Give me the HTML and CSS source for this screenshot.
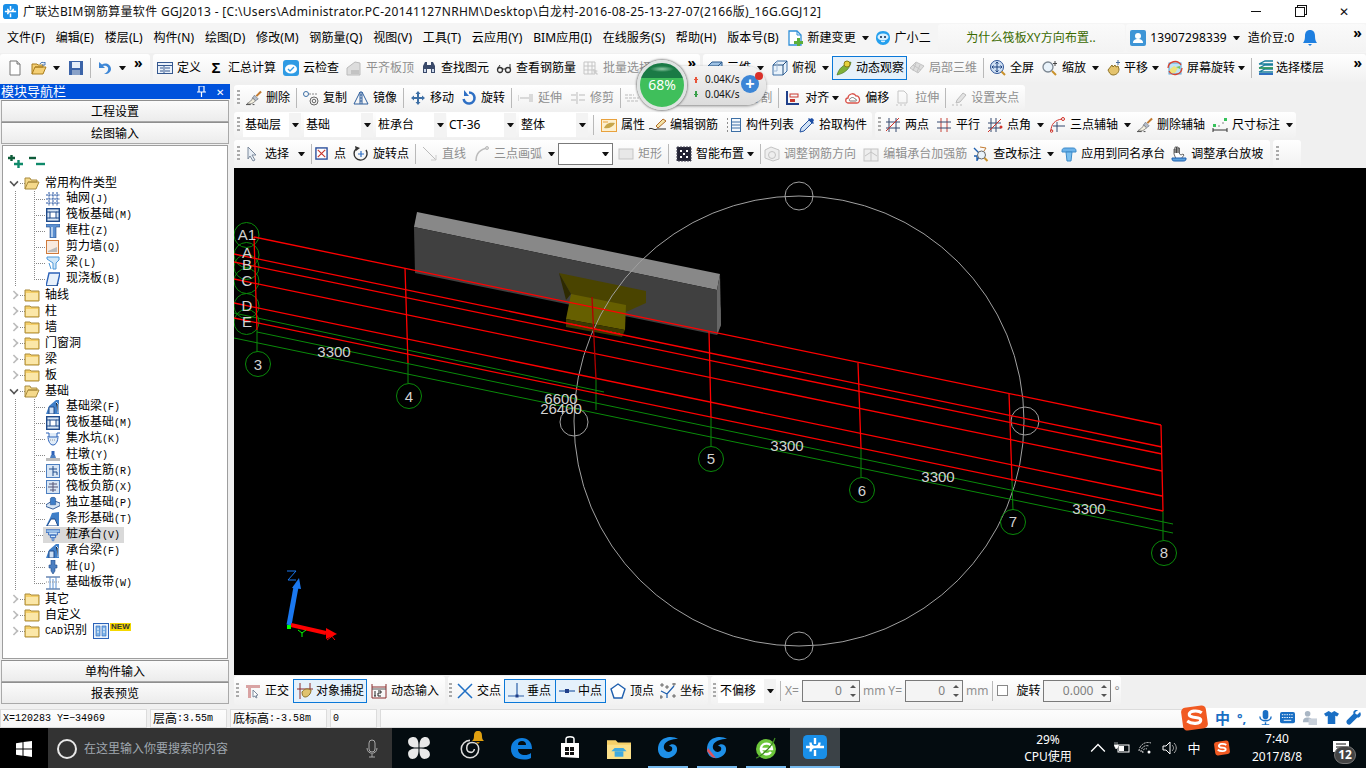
FILE: index.html
```html
<!DOCTYPE html>
<html lang="zh">
<head>
<meta charset="utf-8">
<title>广联达BIM钢筋算量软件 GGJ2013</title>
<link rel="stylesheet" href="styles.css">
</head>
<body>
<svg class="sprite" xmlns="http://www.w3.org/2000/svg">
<symbol id="logo" viewBox="0 0 16 16"><rect width="16" height="16" rx="3" fill="#1a8fe8"/><path d="M8 2v4M8 10v4M2 8h12M5 5c0 2 1 3 3 3s3-1 3-3M5 11c0-2 1-3 3-3" fill="none" stroke="#fff" stroke-width="1.600"/></symbol>
<symbol id="new" viewBox="0 0 16 16"><path d="M3 1h7l3 3v11H3z" fill="#fff" stroke="#777"/><path d="M10 1v3h3" fill="#ddd" stroke="#777"/></symbol>
<symbol id="open" viewBox="0 0 16 16"><path d="M1 14V4h5l1 1h5v2H4l-3 7h11l3-7H4" fill="#f4cf74" stroke="#a97c1d"/><path d="M9 4c1-2 3-2 4-1l1-1v3h-3" fill="none" stroke="#4d7bb5"/></symbol>
<symbol id="save" viewBox="0 0 16 16"><rect x="1" y="1" width="14" height="14" fill="#3c64a8"/><rect x="4" y="2" width="8" height="6" fill="#e6eef8"/><rect x="4" y="10" width="8" height="5" fill="#8aa2c8"/></symbol>
<symbol id="undo" viewBox="0 0 16 16"><path d="M2 2v6h6L6 6c3-1 6 1 5 4-.4 1.600-2 3-4 4 4 .5 7-2 7-5 0-5-6-7-9-4.500z" fill="#3d86d6"/></symbol>
<symbol id="def" viewBox="0 0 16 16"><rect x=".5" y="2.500" width="15" height="11" fill="#eaf1fa" stroke="#35588f"/><path d="M1 5.500h14M3 8h3M3 11h3M8 8h5M8 11h5M7 6v7" stroke="#35588f" fill="none"/></symbol>
<symbol id="cloud" viewBox="0 0 16 16"><rect width="16" height="16" rx="3" fill="#2f9be4"/><ellipse cx="8" cy="9" rx="6" ry="4.500" fill="#fff"/><path d="M5 9l2 2 4-4" stroke="#2f9be4" stroke-width="1.300" fill="none"/></symbol>
<symbol id="gflat" viewBox="0 0 16 16"><path d="M1 15V8l8-6 5 1v12z" fill="#ddd" stroke="#bbb"/><path d="M5 11h8M5 13h8" stroke="#aaa"/></symbol>
<symbol id="find" viewBox="0 0 16 16"><path d="M2 13V6l2-4h2v11zM14 13V6l-2-4h-2v11z" fill="#3a4a6a"/><rect x="6" y="5" width="4" height="4" fill="#3a4a6a"/><rect x="3" y="9" width="2" height="3" fill="#cdd9ec"/><rect x="11" y="9" width="2" height="3" fill="#cdd9ec"/></symbol>
<symbol id="glass" viewBox="0 0 16 16"><circle cx="4" cy="10" r="2.500" fill="none" stroke="#333" stroke-width="1.300"/><circle cx="12" cy="10" r="2.500" fill="none" stroke="#333" stroke-width="1.300"/><path d="M6 9h4M2 8l2-3M14 8V4" stroke="#333" fill="none"/></symbol>
<symbol id="batch" viewBox="0 0 16 16"><path d="M1 2h11v12H1zM1 6h11M1 10h11M5 2v12M9 2v12" fill="none" stroke="#c5c5c5"/><path d="M10 9l5 2-2 1 2 2-1 1-2-2-1 1z" fill="#ccc"/></symbol>
<symbol id="cube" viewBox="0 0 16 16"><path d="M1 6l4-4h10v8l-4 4H1z" fill="#9ec3e6" stroke="#2d5a8c"/><path d="M1 6h10v8M11 6l4-4" fill="none" stroke="#2d5a8c"/></symbol>
<symbol id="top" viewBox="0 0 16 16"><path d="M1 5l4-4h10v10l-4 4H1z" fill="#eaf3fb" stroke="#3d6fa5"/><path d="M1 5h10v10M11 5l4-4" fill="none" stroke="#1f4a7a"/><path d="M5 1v10H1" fill="none" stroke="#9fb9d6"/></symbol>
<symbol id="orbit" viewBox="0 0 16 16"><path d="M1 15C3 8 7 5 15 2c-1 6-5 11-14 13z" fill="#7fb03a" stroke="#3f6d1d" stroke-width=".6"/><circle cx="11" cy="4" r="3" fill="#e6d23c" stroke="#8a7a15"/></symbol>
<symbol id="gcube" viewBox="0 0 16 16"><path d="M1 8l6-6 8 4-6 7z" fill="#ddd" stroke="#c3c3c3"/><path d="M4 5l8 5M7 3l-3 8M11 5l-3 7" stroke="#c3c3c3" fill="none"/></symbol>
<symbol id="full" viewBox="0 0 16 16"><circle cx="7" cy="7" r="6.500" fill="#cfe0f4" stroke="#2f5597"/><path d="M7 2v10M2 7h10M5.500 3.500L7 2l1.500 1.500M5.500 10.500L7 12l1.500-1.500M3.500 5.500L2 7l1.500 1.500M10.500 5.500L12 7l-1.500 1.500" fill="none" stroke="#1f4480"/><path d="M11.500 11.500l3.500 3.500" stroke="#c9912a" stroke-width="2"/></symbol>
<symbol id="zoom" viewBox="0 0 16 16"><circle cx="6" cy="7" r="5" fill="#e9f3fb" stroke="#7c8792" stroke-width="1.300"/><path d="M10 11l4 4" stroke="#c9912a" stroke-width="2"/><path d="M13 1v5M11 3.500h4" stroke="#444"/></symbol>
<symbol id="pan" viewBox="0 0 16 16"><path d="M2 10l4-5 1 2 2-2 1 2 2-1 1 3c0 4-3 6-6 6-3 0-4-3-5-5z" fill="#e4c36d" stroke="#8f7327"/><path d="M12 0v5M10 2.500h4" stroke="#4a6e9c"/></symbol>
<symbol id="rot" viewBox="0 0 16 16"><rect x="2" y="3" width="12" height="11" fill="#bfe3f7" stroke="#57a6d6"/><path d="M3 9l4-3 4 2-3 5H3z" fill="#eee27c"/><path d="M9 7l4-1v3z" fill="#7cc25d"/><path d="M1 8a7 7 0 0 1 13-3M15 8a7 7 0 0 1-13 3" fill="none" stroke="#d9432f" stroke-width="1.300"/></symbol>
<symbol id="floor" viewBox="0 0 16 16"><path d="M1 4l6-3h8M1 8l6-3h8M1 12l6-3h8M1 4h14M1 8h14M1 12h14" fill="none" stroke="#1a7f9c" stroke-width="1.300"/><path d="M1 14h14" stroke="#2f6fc0" stroke-width="2"/><path d="M1 8h14" stroke="#3aa04a" stroke-width="1.300"/></symbol>
<symbol id="brush" viewBox="0 0 17 16"><path d="M11 6l5-5" stroke="#c27a30" stroke-width="2.200"/><path d="M9 5l4 4-3 2-3-3z" fill="#b5bcc7" stroke="#5a6675" stroke-width=".6"/><path d="M7 8c-1 3-3 4-6 6 3 1 7 0 9-3z" fill="#f3efe0" stroke="#5a5a5a" stroke-width=".7"/><path d="M0 15h5M7 15h2" stroke="#444"/></symbol>
<symbol id="copy" viewBox="0 0 16 16"><circle cx="3" cy="4" r="2.500" fill="none" stroke="#3d6fa5"/><circle cx="11" cy="11" r="4" fill="none" stroke="#666"/><circle cx="11" cy="11" r="1.800" fill="none" stroke="#666"/><path d="M6 4h6M13 3v3" stroke="#888" stroke-dasharray="2 1"/></symbol>
<symbol id="mirror" viewBox="0 0 16 16"><path d="M7 2v12H1zM9 2v12h6z" fill="none" stroke="#2f5f9c"/><path d="M8 1v14" stroke="#2f5f9c" stroke-dasharray="2 1"/></symbol>
<symbol id="move" viewBox="0 0 16 16"><path d="M8 1l2.500 3H9v3h3V5.500L15 8l-3 2.500V9H9v3h1.500L8 15l-2.500-3H7V9H4v1.500L1 8l3-2.500V7h3V4H5.500z" fill="#3d6fa5"/></symbol>
<symbol id="rotate" viewBox="0 0 16 16"><path d="M8 2.500a5.500 5.500 0 1 1-5.400 6.500" fill="none" stroke="#2e6fc4" stroke-width="2.600"/><path d="M3 0v6h5z" fill="#2e6fc4"/></symbol>
<symbol id="extend" viewBox="0 0 16 16"><path d="M2 8h9M12 4v8M14 4v8" stroke="#bbb" fill="none"/><path d="M0 5v6" stroke="#bbb"/></symbol>
<symbol id="trim" viewBox="0 0 16 16"><path d="M1 5h5M1 10h5M7 2v12M9 5h6M9 10h6" stroke="#bbb" fill="none"/></symbol>
<symbol id="merge" viewBox="0 0 16 16"><path d="M1 5h9M3 11h12M1 8h14" stroke="#bbb" stroke-dasharray="3 1"/></symbol>
<symbol id="align" viewBox="0 0 16 16"><path d="M2 1v14M2 14h12" stroke="#1f3f8a" stroke-width="2"/><rect x="5" y="4" width="8" height="3" fill="none" stroke="#c8392e"/><rect x="5" y="9" width="5" height="3" fill="#c8392e"/></symbol>
<symbol id="offset" viewBox="0 0 16 16"><path d="M3 13c-3 0-3-5 0-5 0-4 6-6 8-2 4-1 5 7 1 7z" fill="#fff" stroke="#d9534a" stroke-width="1.300"/><path d="M5 11c-1 0-1-2 0-2 1-2 4-2 5 0 2 0 2 2 1 2z" fill="none" stroke="#777"/></symbol>
<symbol id="stretch" viewBox="0 0 16 16"><path d="M3 1h6l3 3v9H3zM1 15h2M5 15h2M9 15h2" fill="none" stroke="#c5c5c5"/></symbol>
<symbol id="grip" viewBox="0 0 16 16"><path d="M1 15h2M5 15h2M9 15h2" stroke="#bbb"/><path d="M6 10l6-7 3 2-6 7-4 1z" fill="#e3e3e3" stroke="#bbb"/></symbol>
<symbol id="prop" viewBox="0 0 16 16"><rect x=".5" y="2.500" width="15" height="12" fill="#fdf0cf" stroke="#e8a13d"/><path d="M3 11c2-5 6-6 11-5-2 4-6 6-11 5z" fill="#c7a64a"/><path d="M2 5h5" stroke="#e8a13d"/></symbol>
<symbol id="rebar" viewBox="0 0 18 16"><path d="M0 12c3-2 5 2 8 0h9" fill="none" stroke="#222"/><path d="M7 9l7-7 3 2-8 7z" fill="#f3e3a5" stroke="#b06a28"/></symbol>
<symbol id="list" viewBox="0 0 16 16"><path d="M1 2h2M1 6h2M1 10h2M1 14h2" stroke="#222" stroke-dasharray="1 1"/><rect x="5.500" y="1.500" width="9" height="13" fill="#f4f8fc" stroke="#3d6fa5"/><path d="M6 5h8M6 8h8M6 11h8" stroke="#3d6fa5"/></symbol>
<symbol id="pick" viewBox="0 0 16 16"><path d="M10 3L2 11l-1 4 4-1 8-8z" fill="#cfe0f4" stroke="#2453a0"/><path d="M9 2l5 5 1-1-1-1 1-2-2-2-2 1-1-1z" fill="#1f4fa5"/></symbol>
<symbol id="two" viewBox="0 0 16 16"><path d="M4 1v14M11 1v14M1 5h14M1 11h14" stroke="#34486e" fill="none"/><path d="M1 14L14 1" stroke="#d0322a"/></symbol>
<symbol id="par" viewBox="0 0 16 16"><path d="M5 1v14M11 1v14" stroke="#c6443b"/><path d="M1 5h14M1 11h14" stroke="#34486e"/></symbol>
<symbol id="ang" viewBox="0 0 16 16"><path d="M4 1v14M9 1v14M1 6h13M1 11h13" stroke="#34486e" fill="none"/><path d="M1 15L14 2" stroke="#d0322a"/><circle cx="14" cy="10" r="1.500" fill="#d0322a"/></symbol>
<symbol id="arc" viewBox="0 0 16 16"><path d="M1 14C1 7 5 3 12 2" fill="none" stroke="#d0322a"/><circle cx="13" cy="2" r="1.500" fill="none" stroke="#d0322a"/><circle cx="1.500" cy="14" r="1.300" fill="none" stroke="#d0322a"/><path d="M7 5v10M3 9h12" stroke="#34486e"/></symbol>
<symbol id="dim" viewBox="0 0 16 16"><path d="M1 11v4M15 11v4M1 13h14" stroke="#333"/><rect x="1" y="7" width="3" height="3" fill="#35c25a"/><rect x="12" y="1" width="3" height="3" fill="#35c25a"/><path d="M6 9h2M10 6h2" stroke="#888"/></symbol>
<symbol id="sel" viewBox="0 0 12 16"><path d="M2 1l8 8H6l3 5-2 1-3-5-2 3z" fill="#e8eef5" stroke="#7c8a9c"/></symbol>
<symbol id="point" viewBox="0 0 14 14"><rect x="1" y="1" width="12" height="12" fill="#fff" stroke="#2b4f9c" stroke-width="1.500"/><path d="M3 3l8 8M11 3l-8 8" stroke="#c9362c" stroke-width="1.200"/></symbol>
<symbol id="rotpt" viewBox="0 0 16 16"><path d="M3 3a6.500 6.500 0 1 0 10 1" fill="none" stroke="#333" stroke-width="1.400"/><path d="M2 0l5 2-4 3z" fill="#333"/><path d="M8 5v6M5 8h6" stroke="#2e6fc4" stroke-width="1.200"/></symbol>
<symbol id="gline" viewBox="0 0 16 16"><path d="M1 1l13 13" stroke="#bbb"/><path d="M14 9v5H9" fill="none" stroke="#ccc"/></symbol>
<symbol id="garc" viewBox="0 0 16 16"><path d="M2 15C2 7 6 3 14 2" fill="none" stroke="#bbb" stroke-width="1.400"/><circle cx="13" cy="2" r="1.500" fill="#ddd" stroke="#bbb"/></symbol>
<symbol id="grect" viewBox="0 0 16 16"><rect x="1" y="3" width="14" height="10" fill="#e8e8e8" stroke="#c5c5c5"/></symbol>
<symbol id="smart" viewBox="0 0 16 16"><rect x="1" y="1" width="14" height="14" fill="#223" stroke="#445" stroke-dasharray="2 1"/><path d="M4 4h2v2H4zM10 4h2v2h-2zM7 7h2v2H7zM4 10h2v2H4zM10 10h2v2h-2z" fill="#fff"/></symbol>
<symbol id="gadj" viewBox="0 0 16 16"><path d="M1 4l6-3 8 3v9l-6 2-8-3z" fill="#eee" stroke="#c3c3c3"/><circle cx="8" cy="9" r="3.500" fill="none" stroke="#c3c3c3"/></symbol>
<symbol id="gedit" viewBox="0 0 16 16"><rect x="1" y="3" width="14" height="12" fill="#eee" stroke="#c3c3c3"/><path d="M8 3v12M2 10l6-4 6 4" fill="none" stroke="#c3c3c3"/></symbol>
<symbol id="check" viewBox="0 0 16 16"><path d="M1 2l5 5M4 14l3-4M1 10h3v5" fill="none" stroke="#1f5fae" stroke-width="1.400"/><circle cx="8.500" cy="9" r="4" fill="#e9f3fb" stroke="#666"/><path d="M11.500 12l3 3" stroke="#c9912a" stroke-width="2"/><path d="M7 1l6 1-2 3" fill="none" stroke="#c27a30"/></symbol>
<symbol id="apply" viewBox="0 0 16 16"><path d="M1 5c0-2 1-3 3-3h8c2 0 3 1 3 3v1H1z" fill="#6cb3ea" stroke="#3d8ac9"/><path d="M5 6h6l-1 9H6z" fill="#7cc0ef" stroke="#3d8ac9"/></symbol>
<symbol id="hand" viewBox="0 0 16 16"><path d="M3 8V3h1v4-6h1.500v6-6H7v6-5h1.500v6L10 9l2-1 1 1-3 4H5z" fill="#fff" stroke="#444" stroke-width=".8"/><path d="M1 12h14v1c0 2-2 2-3 2H4c-1 0-3 0-3-2z" fill="#5aa0dc" stroke="#1f5fae"/></symbol>
<symbol id="ortho" viewBox="0 0 16 16"><path d="M1 2h14v3H6v10H3V5H1z" fill="#d9a3a3"/><path d="M8 7l5 5-2 .5 1 2-1 .5-1-2-2 1z" fill="#fff" stroke="#7c8a9c"/></symbol>
<symbol id="snap" viewBox="0 0 16 16"><path d="M3 0v16M13 0v10M0 6h16" stroke="#8a2c2c"/><path d="M5 9c2-3 5-4 9-2 0 4-3 7-6 7-2 0-3-2-3-5z" fill="#e0c36e" stroke="#8f7327"/></symbol>
<symbol id="dyn" viewBox="0 0 16 16"><path d="M1 1v3h14V1M1 4v11h14V4" fill="none" stroke="#8a2c2c"/><path d="M1 6h14" stroke="#555"/><path d="M4 8v5M3 13h2M7 8h3v2H7v3h3" fill="none" stroke="#222"/></symbol>
<symbol id="cross" viewBox="0 0 16 16"><path d="M1 1l14 14M15 1L1 15" stroke="#1f6fc4" stroke-width="1.500"/></symbol>
<symbol id="perp" viewBox="0 0 16 16"><path d="M9 0v13M0 13h16" stroke="#2b5fa8" stroke-width="1.200"/><rect x="7.500" y="11.500" width="3" height="3" fill="#1f3f8a"/></symbol>
<symbol id="mid" viewBox="0 0 16 16"><path d="M0 8h16" stroke="#2b5fa8" stroke-width="1.200"/><rect x="6" y="6" width="4" height="4" fill="#1f3f8a"/></symbol>
<symbol id="vert" viewBox="0 0 16 16"><path d="M8 1l7 5-3 9H4L1 6z" fill="#fff" stroke="#1f5fae" stroke-width="1.400"/></symbol>
<symbol id="coord" viewBox="0 0 16 16"><path d="M1 8l6 3 7-8M7 11v4" fill="none" stroke="#1f5fae" stroke-width="1.200"/><path d="M1 1h2v2H1zM13 0h2v2h-2zM0 13h2v2H0zM6 3h2v2H6zM13 12h2v2h-2z" fill="none" stroke="#333" stroke-width=".7"/></symbol>
<symbol id="change" viewBox="0 0 16 16"><path d="M2 1h8l4 4v10H2z" fill="#fff" stroke="#2f8fd8" stroke-width="1.300"/><path d="M10 1v4h4" fill="none" stroke="#2f8fd8"/><path d="M10 8v3h-3v3h3v2h3v-2h3v-3h-3V8z" fill="#5caf3a"/></symbol>
<symbol id="bot" viewBox="0 0 16 16"><path d="M8 1c5 0 7 3 7 7s-3 7-7 7-7-3-7-7 2-7 7-7z" fill="#25a0ee"/><ellipse cx="8" cy="7" rx="5.500" ry="3.500" fill="#d8f0ff"/><circle cx="6" cy="7" r="1" fill="#124"/><circle cx="10" cy="7" r="1" fill="#124"/><path d="M6 11c1 1 3 1 4 0" stroke="#fff" fill="none"/></symbol>
<symbol id="user" viewBox="0 0 16 16"><rect width="16" height="16" rx="2" fill="#3e95d6"/><circle cx="8" cy="6" r="3" fill="#fff"/><path d="M3 13c0-3 2-4 5-4s5 1 5 4z" fill="#fff"/></symbol>
<symbol id="bell" viewBox="0 0 14 16"><path d="M7 0c3 0 5 2 5 6 0 3 .5 5 2 7H0c1.500-2 2-4 2-7 0-4 2-6 5-6z" fill="#1e7fe0"/><path d="M5 14h4l-2 2z" fill="#1e7fe0"/></symbol>
<symbol id="fopen" viewBox="0 0 16 14"><path d="M1 13V2h5l1 2h6v2H4l-3 7h11l3-7H4" fill="#f5d98a" stroke="#a88a3c"/></symbol>
<symbol id="fold" viewBox="0 0 16 14"><path d="M1 13V2h5l1 1h8v10z" fill="#f5cf68" stroke="#a88a3c"/><path d="M2 5h12v7H2z" fill="#fbe7a8"/></symbol>
<symbol id="tgrid" viewBox="0 0 14 14"><path d="M3 0v14M7 0v14M11 0v14M0 3h14M0 7h14M0 11h14" stroke="#2453a0" stroke-dasharray="2 .7"/></symbol>
<symbol id="traft" viewBox="0 0 14 14"><rect x=".7" y=".7" width="12.600" height="12.600" fill="#d8e6f5" stroke="#1f4a8a" stroke-width="1.400"/><rect x="4" y="4" width="6" height="6" fill="#fff" stroke="#1f4a8a"/><path d="M1 4h3M1 10h3M10 4h3M10 10h3" stroke="#1f4a8a"/></symbol>
<symbol id="tcol" viewBox="0 0 14 14"><path d="M0 0h14v3h-4v11H4V3H0z" fill="#5b8fd0" stroke="#1f4a8a" stroke-width=".6"/><path d="M6 3v10" stroke="#cfe0f4" stroke-width="1.500"/></symbol>
<symbol id="twall" viewBox="0 0 14 14"><rect x=".5" y=".5" width="12" height="13" fill="#f8eadf" stroke="#d07a3a"/><path d="M2 11l9-4v5H2z" fill="#bbb"/></symbol>
<symbol id="tbeam" viewBox="0 0 14 14"><path d="M1 1h12v3l-3 3v6H7V7L1 3z" fill="#cfe6f8" stroke="#4d98d8"/><path d="M3 7l2 6" stroke="#4d98d8"/></symbol>
<symbol id="tslab" viewBox="0 0 14 14"><path d="M3 1h11l-3 13H0z" fill="#e8f1fb" stroke="#2c62b8" stroke-width="1.400"/><path d="M1 14h10l1-3" stroke="#1f4a8a" fill="none"/></symbol>
<symbol id="tfb" viewBox="0 0 14 14"><path d="M0 14l3-8 7-6h3v14z" fill="#3f7fc8"/><path d="M3 14V7h5v7z" fill="#cfe0f4" stroke="#1f4a8a"/><path d="M10 2l2 2v9" stroke="#cfe0f4"/></symbol>
<symbol id="tpit" viewBox="0 0 14 14"><path d="M0 1h3v4h8V1h3M2 4c0 5 2 9 5 9s5-4 5-9" fill="#e0ecf8" stroke="#2c62b8"/><path d="M4 8h6" stroke="#999" stroke-dasharray="1 1"/></symbol>
<symbol id="tcap" viewBox="0 0 14 14"><path d="M0 10h14v3H0z" fill="#bbb"/><path d="M4 10l1-3h4l1 3z" fill="#4d7fc0"/><rect x="5.500" y="3" width="3" height="4" fill="#2c62b8"/></symbol>
<symbol id="tmain" viewBox="0 0 14 14"><rect x=".5" y=".5" width="13" height="13" fill="#d8e6f5" stroke="#4d7fc0"/><path d="M3 5h8M7 2v10M7 8h4v3" stroke="#1f4a8a" fill="none"/></symbol>
<symbol id="tneg" viewBox="0 0 14 14"><rect x=".5" y=".5" width="13" height="13" fill="#d8e6f5" stroke="#4d7fc0"/><path d="M2 7h10M7 2v10M3 4h8M4 10h6" stroke="#557" fill="none"/></symbol>
<symbol id="tind" viewBox="0 0 16 14"><path d="M0 9l8-5 8 3v3l-8 4-8-3z" fill="#d8e6f5" stroke="#1f4a8a"/><path d="M5 2c0-2 6-2 6 0v7H5z" fill="#3f7fc8" stroke="#1f4a8a" stroke-width=".6"/></symbol>
<symbol id="tstrip" viewBox="0 0 14 14"><path d="M0 14l4-8 2-5 7-1v14z" fill="#3f7fc8"/><path d="M1 14l4-7h4l3 7z" fill="#fff" stroke="#1f4a8a"/></symbol>
<symbol id="tpc" viewBox="0 0 16 14"><path d="M0 1h16v3H0z" fill="#a8cdf0" stroke="#2c62b8"/><path d="M3 4v3h10V4M5 7h6v3H5zM7 10v3l1 1 1-1v-3" fill="#cfe6f8" stroke="#2c62b8"/></symbol>
<symbol id="tpile" viewBox="0 0 14 14"><path d="M5 0h4v5h2v3H9v3l-2 3-2-3V8H3V5h2z" fill="#4d7fc0" stroke="#1f4a8a" stroke-width=".6"/></symbol>
<symbol id="tband" viewBox="0 0 14 14"><path d="M0 1h14M0 13h14" stroke="#1f4a8a" stroke-width="1.200"/><path d="M4 1v12M10 1v12M7 3v10" stroke="#5b8fd0"/><path d="M0 6h14" stroke="#999" stroke-dasharray="1 1"/></symbol>
<symbol id="tcad" viewBox="0 0 16 16"><rect x=".5" y=".5" width="15" height="15" fill="#e8f2fb" stroke="#2c62b8"/><path d="M3 3h4v10H3zM9 3h4v10H9z" fill="#7fb5e8" stroke="#2c62b8" stroke-width=".6"/><path d="M4 6h2M4 9h2M10 6h2M10 9h2" stroke="#fff"/></symbol>
<symbol id="win" viewBox="0 0 16 16"><path d="M0 2.300l6.500-1V7.500H0zM7.500 1.100L16 0v7.500H7.500zM0 8.500h6.500v6.200L0 13.700zM7.500 8.500H16V16l-8.500-1.200z" fill="#fff"/></symbol>
<symbol id="mic" viewBox="0 0 14 20"><rect x="4" y="1" width="6" height="12" rx="3" fill="none" stroke="#a8a8a8"/><path d="M2 9c0 7 10 7 10 0M7 15v3M4 18h6" fill="none" stroke="#a8a8a8"/></symbol>
<symbol id="pin" viewBox="0 0 22 22"><path d="M10.500 10.500C3 11 1 8 1 5c0-3 3-4 5-4 3 0 5 3 4.500 9.500zM11.500 10.500C11 3 14 1 17 1c3 0 4 3 4 5 0 3-3 5-9.500 4.500zM11.500 11.500C19 11 21 14 21 17c0 3-3 4-5 4-3 0-5-3-4.500-9.500zM10.500 11.500C11 19 8 21 5 21c-3 0-4-3-4-5 0-3 3-5 9.500-4.500z" fill="#e8e8e8"/></symbol>
<symbol id="swirl" viewBox="0 0 22 22"><path d="M11 4a8 8 0 1 0 8 8c0-4-3-6-6-6s-5 2-5 5 2 4 4 4 3-2 3-3" fill="none" stroke="#ddd" stroke-width="1.400"/></symbol>
<symbol id="tbell" viewBox="0 0 14 14"><path d="M7 0c3 0 4 2 4 5 0 2 .5 4 2 5H1c1.500-1 2-3 2-5 0-3 1-5 4-5z" fill="#e0a010"/><path d="M5 11h4l-2 2z" fill="#c48a08"/></symbol>
<symbol id="edge" viewBox="0 0 24 24"><path d="M2 13C2 6 7 2 13 2c6 0 10 4 10 11H9c0 4 3 6 7 6 2 0 4-.5 6-2v5c-2 1-4 1.500-7 1.500C7 23.500 2 20 2 13zm7-4h8c0-3-1.500-4-4-4s-4 1-4 4z" fill="#0f7fe0"/></symbol>
<symbol id="store" viewBox="0 0 22 24"><path d="M2 7h18v15l-18-1z" fill="#fff"/><path d="M7 7V3c0-3 8-3 8 0v4" fill="none" stroke="#fff" stroke-width="1.500"/><path d="M6 11h4v4H6zM11 11h4v4h-4zM6 16h4v3H6zM11 16h4v3h-4z" fill="#111"/></symbol>
<symbol id="expl" viewBox="0 0 22 20"><path d="M0 3h8l2 2h12v15H0z" fill="#f5cf68"/><path d="M0 7h22v13H0z" fill="#fbe08a"/><path d="M7 13h8v5H7z" fill="#3fa9e0"/><path d="M4 13h14l-3-3H7z" fill="#3fa9e0"/></symbol>
<symbol id="gdl" viewBox="0 0 24 24"><path d="M22 3c-4-3-14-3-18 3-4 6-2 15 5 16 7 1 13-4 12-10-.5-4-6-5-8-2 2 0 4 1 3 4-.6 2-5 3-7 0-3-4 0-11 13-11z" fill="#1e90e8"/></symbol>
<symbol id="gdr" viewBox="0 0 24 24"><path d="M22 3c-4-3-14-3-18 3-4 6-2 15 5 16 7 1 13-4 12-10-.5-4-6-5-8-2 2 0 4 1 3 4-.6 2-5 3-7 0-3-4 0-11 13-11z" fill="#1e90e8"/><path d="M3 12l8 10-4-1-5-6z" fill="#e0525a"/></symbol>
<symbol id="ie" viewBox="0 0 24 24"><circle cx="12" cy="13" r="10" fill="#6cc63a"/><path d="M6 13h12c0-7-10-7-11-1-1 6 7 8 10 4" fill="none" stroke="#fff" stroke-width="2.400"/><path d="M2 22c2 0 16-10 19-20" fill="none" stroke="#3d8a20" stroke-width="1.200"/></symbol>
<symbol id="sg" viewBox="0 0 26 26"><rect x="1" y="2" width="24" height="22" rx="4" fill="#f15a22" transform="rotate(-8 13 13)"/><path d="M20 8c-4-3-13-2-12 2 1 4 11 1 11 5 0 4-9 4-13 1" fill="none" stroke="#fff" stroke-width="3"/></symbol>
</svg>

<div class="app">
  <header class="title">
    <svg class="logo"><use href="#logo"/></svg>
    <span class="title-text">广联达BIM钢筋算量软件 GGJ2013 - [C:\Users\Administrator.PC-20141127NRHM\Desktop\白龙村-2016-08-25-13-27-07(2166版)_16G.GGJ12]</span>
    <div class="winbtns"><span class="wmin"></span><span class="wmax"></span><span class="wclose">✕</span></div>
  </header>

  <nav class="menu">
    <span>文件(F)</span><span>编辑(E)</span><span>楼层(L)</span><span>构件(N)</span><span>绘图(D)</span><span>修改(M)</span><span>钢筋量(Q)</span><span>视图(V)</span><span>工具(T)</span><span>云应用(Y)</span><span>BIM应用(I)</span><span>在线服务(S)</span><span>帮助(H)</span><span>版本号(B)</span>
    <span class="it m-new"><svg class="i"><use href="#change"/></svg>新建变更<i class="car"></i></span>
    <span class="it m-bot"><svg class="i"><use href="#bot"/></svg>广小二</span>
    <span class="tip">为什么筏板XY方向布置..</span>
    <span class="acct">
      <span class="it"><svg class="i"><use href="#user"/></svg>13907298339<i class="car"></i></span>
      <span class="bean">造价豆:0</span>
      <svg class="bell"><use href="#bell"/></svg>
      <span class="more end">»</span>
    </span>
  </nav>

  <div class="row r1">
    <div class="band b11">
      <svg class="i"><use href="#new"/></svg>
      <span class="it"><svg class="i"><use href="#open"/></svg><i class="car"></i></span>
      <svg class="i"><use href="#save"/></svg>
      <i class="sep"></i>
      <span class="it"><svg class="i"><use href="#undo"/></svg><i class="car"></i></span>
      <span class="more">»</span>
    </div>
    <div class="band b12">
      <span class="it"><svg class="i"><use href="#def"/></svg>定义</span>
      <span class="it"><b class="sigma">Σ</b>汇总计算</span>
      <span class="it"><svg class="i"><use href="#cloud"/></svg>云检查</span>
      <span class="it off"><svg class="i"><use href="#gflat"/></svg>平齐板顶</span>
      <span class="it"><svg class="i"><use href="#find"/></svg>查找图元</span>
      <span class="it"><svg class="i"><use href="#glass"/></svg>查看钢筋量</span>
      <span class="it off"><svg class="i"><use href="#batch"/></svg>批量选择</span>
      <span class="more push">»</span>
    </div>
    <div class="band b13">
      <span class="it"><svg class="i"><use href="#cube"/></svg>三维<i class="car"></i></span>
      <span class="it"><svg class="i"><use href="#top"/></svg>俯视<i class="car"></i></span>
      <span class="it act a-orbit"><svg class="i"><use href="#orbit"/></svg>动态观察</span>
      <span class="it off"><svg class="i"><use href="#gcube"/></svg>局部三维</span>
      <i class="sep"></i>
      <span class="it"><svg class="i"><use href="#full"/></svg>全屏</span>
      <span class="it"><svg class="i"><use href="#zoom"/></svg>缩放<i class="car"></i></span>
      <span class="it tight ml-1"><svg class="i"><use href="#pan"/></svg>平移<i class="car"></i></span>
      <span class="it"><svg class="i"><use href="#rot"/></svg>屏幕旋转<i class="car near"></i></span>
      <i class="sep"></i>
      <span class="it tight"><svg class="i"><use href="#floor"/></svg>选择楼层</span>
      <span class="more end">»</span>
    </div>
  </div>

  <div class="main">
    <aside class="nav">
      <div class="nav-title"><span>模块导航栏</span><span class="nav-ctl"><svg class="navpin" viewBox="0 0 9 11"><path d="M2 0h5v6H2zM0 6h9M4.500 6v5" fill="none" stroke="#fff" stroke-width="1.200"/></svg><span class="navx">✕</span></span></div>
      <div class="nbtn">工程设置</div>
      <div class="nbtn">绘图输入</div>
      <div class="treebox">
        <div class="treetools">
          <svg class="pm" viewBox="0 0 18 14"><path d="M2 4h7M5.500 1v6" stroke="#0f5c3a" stroke-width="2.400"/><path d="M8 10h9M12.500 6v8" stroke="#0f8a6a" stroke-width="2.400"/></svg>
          <svg class="pm" viewBox="0 0 18 14"><path d="M1 4h7" stroke="#0f5c3a" stroke-width="2.400"/><path d="M8 10h9" stroke="#0f8a6a" stroke-width="2.400"/></svg>
        </div>
        <div class="tree">
          <div class="tr"><i class="ex open"></i><i class="dash"></i><svg class="fd"><use href="#fopen"/></svg><span>常用构件类型</span></div>
          <div class="tr ch"><i class="g1"></i><i class="g2"></i><svg class="ti"><use href="#tgrid"/></svg><span>轴网<em>(J)</em></span></div>
          <div class="tr ch"><i class="g1"></i><i class="g2"></i><svg class="ti"><use href="#traft"/></svg><span>筏板基础<em>(M)</em></span></div>
          <div class="tr ch"><i class="g1"></i><i class="g2"></i><svg class="ti"><use href="#tcol"/></svg><span>框柱<em>(Z)</em></span></div>
          <div class="tr ch"><i class="g1"></i><i class="g2"></i><svg class="ti"><use href="#twall"/></svg><span>剪力墙<em>(Q)</em></span></div>
          <div class="tr ch"><i class="g1"></i><i class="g2"></i><svg class="ti"><use href="#tbeam"/></svg><span>梁<em>(L)</em></span></div>
          <div class="tr ch"><i class="g1"></i><i class="g2 last"></i><svg class="ti"><use href="#tslab"/></svg><span>现浇板<em>(B)</em></span></div>
          <div class="tr"><i class="ex"></i><i class="dash"></i><svg class="fd"><use href="#fold"/></svg><span>轴线</span></div>
          <div class="tr"><i class="ex"></i><i class="dash"></i><svg class="fd"><use href="#fold"/></svg><span>柱</span></div>
          <div class="tr"><i class="ex"></i><i class="dash"></i><svg class="fd"><use href="#fold"/></svg><span>墙</span></div>
          <div class="tr"><i class="ex"></i><i class="dash"></i><svg class="fd"><use href="#fold"/></svg><span>门窗洞</span></div>
          <div class="tr"><i class="ex"></i><i class="dash"></i><svg class="fd"><use href="#fold"/></svg><span>梁</span></div>
          <div class="tr"><i class="ex"></i><i class="dash"></i><svg class="fd"><use href="#fold"/></svg><span>板</span></div>
          <div class="tr"><i class="ex open"></i><i class="dash"></i><svg class="fd"><use href="#fopen"/></svg><span>基础</span></div>
          <div class="tr ch"><i class="g1"></i><i class="g2"></i><svg class="ti"><use href="#tfb"/></svg><span>基础梁<em>(F)</em></span></div>
          <div class="tr ch"><i class="g1"></i><i class="g2"></i><svg class="ti"><use href="#traft"/></svg><span>筏板基础<em>(M)</em></span></div>
          <div class="tr ch"><i class="g1"></i><i class="g2"></i><svg class="ti"><use href="#tpit"/></svg><span>集水坑<em>(K)</em></span></div>
          <div class="tr ch"><i class="g1"></i><i class="g2"></i><svg class="ti"><use href="#tcap"/></svg><span>柱墩<em>(Y)</em></span></div>
          <div class="tr ch"><i class="g1"></i><i class="g2"></i><svg class="ti"><use href="#tmain"/></svg><span>筏板主筋<em>(R)</em></span></div>
          <div class="tr ch"><i class="g1"></i><i class="g2"></i><svg class="ti"><use href="#tneg"/></svg><span>筏板负筋<em>(X)</em></span></div>
          <div class="tr ch"><i class="g1"></i><i class="g2"></i><svg class="ti"><use href="#tind"/></svg><span>独立基础<em>(P)</em></span></div>
          <div class="tr ch"><i class="g1"></i><i class="g2"></i><svg class="ti"><use href="#tstrip"/></svg><span>条形基础<em>(T)</em></span></div>
          <div class="tr ch"><i class="g1"></i><i class="g2 short"></i><span class="picked"><svg class="ti"><use href="#tpc"/></svg><span>桩承台<em>(V)</em></span></span></div>
          <div class="tr ch"><i class="g1"></i><i class="g2"></i><svg class="ti"><use href="#tfb"/></svg><span>承台梁<em>(F)</em></span></div>
          <div class="tr ch"><i class="g1"></i><i class="g2"></i><svg class="ti"><use href="#tpile"/></svg><span>桩<em>(U)</em></span></div>
          <div class="tr ch"><i class="g1"></i><i class="g2 last"></i><svg class="ti"><use href="#tband"/></svg><span>基础板带<em>(W)</em></span></div>
          <div class="tr"><i class="ex"></i><i class="dash"></i><svg class="fd"><use href="#fold"/></svg><span>其它</span></div>
          <div class="tr"><i class="ex"></i><i class="dash"></i><svg class="fd"><use href="#fold"/></svg><span>自定义</span></div>
          <div class="tr"><i class="ex"></i><i class="dash"></i><svg class="fd"><use href="#fold"/></svg><span><em class="big">CAD</em>识别</span><svg class="cadi"><use href="#tcad"/></svg><span class="newtag">NEW</span></div>
        </div>
      </div>
      <div class="nbtn">单构件输入</div>
      <div class="nbtn">报表预览</div>
    </aside>

    <section class="work">
      <div class="row r2">
        <div class="band b21">
          <i class="gr"></i>
          <span class="it"><svg class="i"><use href="#brush"/></svg>删除</span><i class="sep"></i>
          <span class="it"><svg class="i"><use href="#copy"/></svg>复制</span>
          <span class="it ml-2"><svg class="i"><use href="#mirror"/></svg>镜像</span><i class="sep"></i>
          <span class="it"><svg class="i"><use href="#move"/></svg>移动</span>
          <span class="it ml-1"><svg class="i"><use href="#rotate"/></svg>旋转</span><i class="sep"></i>
          <span class="it off"><svg class="i"><use href="#extend"/></svg>延伸</span>
          <span class="it off"><svg class="i"><use href="#trim"/></svg>修剪</span><i class="sep"></i>
          <span class="it off ml-3"><svg class="i"><use href="#merge"/></svg>打断</span>
          <span class="it off"><svg class="i"><use href="#merge"/></svg>合并</span>
          <span class="it off"><svg class="i"><use href="#merge"/></svg>分割</span><i class="sep"></i>
          <span class="it"><svg class="i"><use href="#align"/></svg>对齐<i class="car near"></i></span>
          <span class="it ml-2"><svg class="i"><use href="#offset"/></svg>偏移</span>
          <span class="it off ml-2"><svg class="i"><use href="#stretch"/></svg>拉伸</span><i class="sep"></i>
          <span class="it off ml-1"><svg class="i"><use href="#grip"/></svg>设置夹点</span>
        </div>
      </div>
      <div class="row r3">
        <div class="band b31">
          <i class="gr"></i>
          <span class="pick p1">基础层<i class="pb"><i class="car"></i></i></span>
          <span class="pick p2">基础<i class="pb"><i class="car"></i></i></span>
          <span class="pick p3">桩承台<i class="pb"><i class="car"></i></i></span>
          <span class="pick p4">CT-36<i class="pb"><i class="car"></i></i></span>
          <span class="pick p5">整体<i class="pb"><i class="car"></i></i></span>
          <i class="sep"></i>
          <span class="it t-a"><svg class="i"><use href="#prop"/></svg>属性</span>
          <span class="it t-b"><svg class="i wide"><use href="#rebar"/></svg>编辑钢筋</span>
          <span class="it t-c"><svg class="i"><use href="#list"/></svg>构件列表</span>
          <span class="it t-d"><svg class="i"><use href="#pick"/></svg>拾取构件</span>
        </div>
        <div class="band b32">
          <i class="gr"></i>
          <span class="it ml-1"><svg class="i"><use href="#two"/></svg>两点</span>
          <span class="it"><svg class="i"><use href="#par"/></svg>平行</span>
          <span class="it"><svg class="i"><use href="#ang"/></svg>点角<i class="car"></i></span>
          <span class="it ml-1"><svg class="i"><use href="#arc"/></svg>三点辅轴<i class="car"></i></span>
          <span class="it ml-1"><svg class="i"><use href="#brush"/></svg>删除辅轴</span>
          <span class="it"><svg class="i"><use href="#dim"/></svg>尺寸标注<i class="car"></i></span>
        </div>
      </div>
      <div class="row r4">
        <div class="band b41">
          <i class="gr"></i>
          <span class="it s-sel"><svg class="isel"><use href="#sel"/></svg>选择<i class="car"></i></span><i class="sep"></i>
          <span class="it s-pt"><svg class="ipt"><use href="#point"/></svg>点</span>
          <span class="it ml-1"><svg class="i"><use href="#rotpt"/></svg>旋转点</span><i class="sep"></i>
          <span class="it off"><svg class="i"><use href="#gline"/></svg>直线</span>
          <span class="it off"><svg class="i"><use href="#garc"/></svg>三点画弧<i class="car"></i></span>
          <span class="combo ml-5"><i class="car"></i></span>
          <span class="it off ml-3"><svg class="i"><use href="#grect"/></svg>矩形</span><i class="sep"></i>
          <span class="it mp-1"><svg class="i"><use href="#smart"/></svg>智能布置<i class="car near"></i></span><i class="sep"></i>
          <span class="it off ml-3"><svg class="i"><use href="#gadj"/></svg>调整钢筋方向</span>
          <span class="it off ml-1"><svg class="i"><use href="#gedit"/></svg>编辑承台加强筋</span>
          <span class="it ml-2"><svg class="i"><use href="#check"/></svg>查改标注<i class="car"></i></span>
          <span class="it ml-1"><svg class="i"><use href="#apply"/></svg>应用到同名承台</span>
          <span class="it ml-2"><svg class="i"><use href="#hand"/></svg>调整承台放坡</span>
        </div>
        <div class="band b42"><i class="gr"></i></div>
      </div>

      <div class="canvas">
        <svg class="cad" viewBox="234 168 1132 507" xmlns="http://www.w3.org/2000/svg">
          <polygon points="417,212 720,274 717,290 414,227" fill="#888"/>
          <polygon points="414,227 717,290 721,310 721,325 717,335 415,273" fill="#404040"/>
          <polygon points="717,290 720,274 721,325 717,335" fill="#666"/>
          <polygon points="559,273 646,291 646,303 626,312 571,294" fill="#4a4400"/>
          <polygon points="571,294 626,305 625,330 566,319" fill="#665f00"/>
          <polygon points="566,319 625,330 622,337 566,327" fill="#3d3800"/>
          <polygon points="559,273 571,294 566,300" fill="#2e2a00"/>

          <g class="wl">
            <circle cx="799" cy="421" r="225"/>
            <circle cx="799" cy="196" r="14"/>
            <circle cx="799" cy="646" r="14"/>
            <circle cx="574" cy="422" r="14"/>
            <circle cx="1025" cy="421" r="14"/>
          </g>

          <g class="gl">
            <path d="M234 313L604 392M257 332L1173 524M234 338L1173 533"/>
            <path d="M257 330V352M408 363V383M596 380V410M711 417L711 446M861 448V477M1012 481L1013 510M1163 511V540"/>
            <circle cx="246.500" cy="235" r="12.500"/><circle cx="246.500" cy="255" r="12.500"/><circle cx="246.500" cy="267" r="12.500"/><circle cx="246.500" cy="281" r="12.500"/><circle cx="246.500" cy="306" r="12.500"/><circle cx="246.500" cy="322" r="12.500"/>
            <circle cx="258" cy="364" r="12.500"/><circle cx="409" cy="396" r="12.500"/><circle cx="711" cy="459" r="12.500"/><circle cx="862" cy="490" r="12.500"/><circle cx="1013" cy="522" r="12.500"/><circle cx="1164" cy="553" r="12.500"/>
          </g>

          <g class="rl">
            <path d="M254 237L1161 425M234 254L1162 447M234 262L1162 454M234 279L1162 471M234 303L1162 496M234 318L1163 511"/>
            <path d="M254 237L257 330M405 268L408 363M709 331L711 417M858 363L861 448M1009 393L1012 481M1161 425L1163 511"/>
            <path class="drk" d="M592 297L596 380"/>
          </g>
          <path class="rdots" d="M571 324L622 334"/>

          <g class="lbl">
            <text x="247" y="240">A1</text><text x="247" y="258">A</text><text x="247" y="270">B</text><text x="247" y="286">C</text><text x="247" y="311">D</text><text x="247" y="327">E</text>
            <text x="258" y="370">3</text><text x="409" y="402">4</text><text x="711" y="464">5</text><text x="862" y="496">6</text><text x="1013" y="527">7</text><text x="1164" y="558">8</text>
            <text x="334" y="357">3300</text><text x="561" y="404">6600</text><text x="561" y="414">26400</text><text x="787" y="451">3300</text><text x="938" y="482">3300</text><text x="1089" y="514">3300</text>
          </g>

          <path d="M289 625L296 587" stroke="#1a78f0" stroke-width="5"/>
          <polygon points="299,578 292,588 301,589" fill="#1a78f0"/>
          <path d="M287 571h9l-8 9h8" fill="none" stroke="#1a78f0"/>
          <path d="M291 625L326 633" stroke="#f00" stroke-width="4"/>
          <polygon points="337,634 326,628 326,639" fill="#f00"/>
          <path d="M327 640l8-6M329 633l6 7" stroke="#f00"/>
          <rect x="287" y="625" width="4" height="4" fill="#0f0"/>
          <path d="M298 630l4 3 4-3M302 633v4" fill="none" stroke="#0f0"/>
        </svg>
      </div>

      <div class="row r5">
        <div class="band b51">
          <i class="gr"></i>
          <span class="it"><svg class="i"><use href="#ortho"/></svg>正交</span>
          <span class="it act a-snap"><svg class="i"><use href="#snap"/></svg>对象捕捉</span>
          <span class="it a-dyn"><svg class="i"><use href="#dyn"/></svg>动态输入</span>
        </div>
        <div class="band b52">
          <i class="gr"></i>
          <span class="it ml-1"><svg class="i"><use href="#cross"/></svg>交点</span>
          <span class="it act a-perp"><svg class="i"><use href="#perp"/></svg>垂点</span>
          <span class="it act a-mid"><svg class="i"><use href="#mid"/></svg>中点</span>
          <span class="it"><svg class="i"><use href="#vert"/></svg>顶点</span>
          <span class="it ml-2"><svg class="i"><use href="#coord"/></svg>坐标</span>
        </div>
        <div class="band b53">
          <i class="gr"></i>
          <span class="pick p6">不偏移<i class="pb"><i class="car"></i></i></span>
          <i class="sep"></i>
          <span class="dis">X=</span>
          <span class="spin"><span>0</span><i class="arr"><i></i><i></i></i></span>
          <span class="dis">mm</span>
          <span class="dis">Y=</span>
          <span class="spin"><span>0</span><i class="arr"><i></i><i></i></i></span>
          <span class="dis">mm</span>
          <i class="sep"></i>
          <i class="cb"></i>
          <span class="rott">旋转</span>
          <span class="spin sp2"><span>0.000</span><i class="arr"><i></i><i></i></i></span>
          <span class="dis">°</span>
        </div>
      </div>
    </section>
  </div>

  <footer class="status">
    <span class="c c1"><em>X=120283 Y=−34969</em></span>
    <span class="c c2">层高<em>:3.55m</em></span>
    <span class="c c3">底标高<em>:-3.58m</em></span>
    <span class="c c4"><em>0</em></span>
    <span class="c c5"></span>
  </footer>

  <div class="taskbar">
    <div class="start"><svg class="winico"><use href="#win"/></svg></div>
    <div class="search"><i class="cortana"></i><span>在这里输入你要搜索的内容</span><svg class="micico"><use href="#mic"/></svg></div>
    <div class="apps">
      <span class="app-c"><svg class="ai"><use href="#pin"/></svg></span>
      <span class="app-c wide2"><svg class="ai"><use href="#swirl"/></svg><svg class="tb"><use href="#tbell"/></svg></span>
      <span class="app-c"><svg class="ai"><use href="#edge"/></svg></span>
      <span class="app-c"><svg class="ai"><use href="#store"/></svg></span>
      <span class="app-c"><svg class="ai"><use href="#expl"/></svg></span>
      <span class="app-c run"><svg class="ai"><use href="#gdl"/></svg></span>
      <span class="app-c run"><svg class="ai"><use href="#gdr"/></svg></span>
      <span class="app-c run"><svg class="ai"><use href="#ie"/></svg></span>
      <span class="app-c cur"><svg class="ai"><use href="#logo"/></svg></span>
    </div>
    <div class="tray">
      <div class="cpu"><span>29%</span><span>CPU使用</span></div>
      <span class="ti-c up"><svg viewBox="0 0 14 8"><path d="M1 7l6-6 6 6" fill="none" stroke="#fff" stroke-width="1.200"/></svg></span>
      <span class="ti-c"><svg viewBox="0 0 16 12"><rect x="4" y="3" width="11" height="7" fill="none" stroke="#fff"/><rect x="5" y="4" width="5" height="5" fill="#fff"/><path d="M1 0v3M3 0v3M0 3h4v2l-2 2z" fill="#fff" stroke="#fff" stroke-width=".6"/></svg></span>
      <span class="ti-c"><svg viewBox="0 0 16 14"><path d="M1 10a9 9 0 0 1 12-8M3 11a6 6 0 0 1 8-6M5 12a3 3 0 0 1 4-4" fill="none" stroke="#ddd" stroke-dasharray="2 1"/><circle cx="11" cy="11" r="1.500" fill="#fff"/></svg></span>
      <span class="ti-c"><svg viewBox="0 0 16 14"><path d="M1 5h3l4-4v12l-4-4H1z" fill="none" stroke="#fff"/><path d="M10 4c2 2 2 4 0 6M12 2c3 3 3 7 0 10" fill="none" stroke="#aaa"/></svg></span>
      <span class="zh">中</span>
      <svg class="tray-s"><use href="#sg"/></svg>
      <div class="clock"><span>7:40</span><span>2017/8/8</span></div>
      <div class="note"><svg viewBox="0 0 16 14"><path d="M0 0h16v11H0z" fill="#fff"/><path d="M3 3h10M3 6h10" stroke="#111"/></svg><span class="badge">12</span></div>
    </div>
  </div>
</div>

<div class="speed">
  <div class="ball"><span>68%</span></div>
  <div class="rates"><span><i class="au"></i>0.04K/s</span><span><i class="ad"></i>0.04K/s</span></div>
  <div class="plus">+<i></i></div>
</div>

<div class="ime">
  <svg class="ime-s"><use href="#sg"/></svg>
  <b>中</b>
  <b class="punc">°,</b>
  <svg viewBox="0 0 14 16"><rect x="4" y="0" width="6" height="10" rx="3" fill="#1a6fc4"/><path d="M1 7c0 6 12 6 12 0M7 13v3M3 16h8" fill="none" stroke="#1a6fc4" stroke-width="1.500"/></svg>
  <svg viewBox="0 0 16 14"><rect x="0" y="1" width="16" height="12" rx="2" fill="#1a6fc4"/><path d="M2 4h12M2 7h12" stroke="#fff" stroke-dasharray="1.500 1"/><path d="M4 10h8" stroke="#fff"/></svg>
  <svg viewBox="0 0 16 16"><circle cx="6" cy="4" r="3" fill="#a9b6c4"/><path d="M1 13c0-4 2-5 5-5s5 1 5 5z" fill="#a9b6c4"/><rect x="7" y="9" width="9" height="7" fill="#c8d0da"/></svg>
  <svg viewBox="0 0 16 14"><path d="M5 0l3 2 3-2 5 3-2 3-2-1v9H4V5L2 6 0 3z" fill="#1a6fc4"/></svg>
  <svg viewBox="0 0 16 16"><path d="M15 2l-3 3-2-1 0-2 3-2c-3-1-6 1-5 4L1 11c-2 3 2 6 4 4l7-7c3 1 5-3 3-6z" fill="#1a6fc4"/></svg>
</div>
</body>
</html>
```

FILE: styles.css
```css
* { box-sizing: border-box; }
html, body { margin: 0; padding: 0; width: 1366px; height: 768px; overflow: hidden; background: #f0f0f0; }
body { font: 12px/16px "Noto Sans", "Noto Sans CJK SC", sans-serif; color: #000; position: relative; }
i, em, b { font-style: normal; }
.sprite { position: absolute; width: 0; height: 0; }
.app { display: flex; flex-direction: column; width: 1366px; height: 768px; }

.title { height: 23px; background: #fff; display: flex; align-items: center; padding-left: 3px; flex: none; }
.logo { width: 15px; height: 15px; flex: none; margin-right: 5px; }
.title-text { font-size: 12px; white-space: nowrap; color: #111; letter-spacing: .31px; }
.winbtns { margin-left: auto; display: flex; align-items: center; height: 20px; }
.wmin { width: 10px; height: 1px; background: #111; margin-right: 34px; }
.wmax { width: 10px; height: 10px; border: 1px solid #111; margin-right: 34px; box-shadow: 2px -2px 0 -1px #fff, 2px -2px 0 0 #111; }
.wclose { font-size: 12px; width: 27px; color: #111; }

.menu { height: 30px; flex: none; display: flex; align-items: center; gap: 10.7px; padding-left: 7px; background: #f5f5f5; letter-spacing: .1px; }
.m-new { margin-left: -2px; }
.m-bot { margin-left: -5px; }
.tip { width: 187px; height: 28px; margin-left: -4px; background: linear-gradient(#fafafa, #f3f3f3); border-radius: 3px; color: #3a6a00; display: flex; align-items: center; justify-content: center; }
.acct { flex: 1; height: 28px; margin-left: -9px; display: flex; align-items: center; padding-left: 4px; background: linear-gradient(#fafafa, #f3f3f3); border-radius: 3px; }
.bean { margin-left: 8px; }
.bell { width: 14px; height: 16px; margin-left: 9px; }

.it { display: flex; align-items: center; gap: 4px; white-space: nowrap; flex: none; }
.it.tight { gap: 2px; }
.i { width: 16px; height: 16px; flex: none; }
.i.wide { width: 18px; margin-right: -1px; }
.off { color: #8f8f8f; }
.car { display: inline-block; width: 7px; height: 4px; margin-left: 2px; flex: none; border-left: 3.5px solid transparent; border-right: 3.5px solid transparent; border-top: 4px solid #111; }
.car.near { margin-left: -1px; }
.more { font-size: 14px; line-height: 10px; font-weight: 700; align-self: flex-start; margin-top: 4px; }
.more.push { margin-left: auto; margin-right: 4px; }
.more.end { margin-left: auto; margin-right: 4px; }
.sigma { font-size: 15px; width: 16px; text-align: center; font-family: "Liberation Sans", sans-serif; }
.sep { width: 1px; height: 20px; background: #b9b9b9; flex: none; margin: 0 -2px; }
.gr { width: 3px; height: 16px; flex: none; margin: 0 -2px 0 0; background: repeating-linear-gradient(#aaa 0 2px, transparent 2px 4px); }

.row { display: flex; background: #f0f0f0; flex: none; }
.band { display: flex; align-items: center; gap: 8px; height: 100%; background: linear-gradient(#fff, #f1f1f1); border-radius: 3px; flex: none; }
.r1 { height: 31px; padding: 1px 0 2px; gap: 3px; }
.b11 { width: 150px; padding-left: 7px; }
.b12 { width: 547px; padding-left: 4px; gap: 7px; }
.b13 { flex: 1; flex-basis: 0; padding-left: 4px; min-width: 0; }
.act { border: 1px solid #0a78d8; background: #e5f1fb; height: 24px; padding: 0 2px 0 3px; }
.a-orbit { margin: 0 -6px 0 -5px; width: 75px; }

.main { height: 623px; display: flex; flex: none; }
.nav { width: 230px; flex: none; display: flex; flex-direction: column; background: #f0f0f0; }
.nav-title { height: 15px; background: #0052dc; color: #fff; display: flex; align-items: center; justify-content: space-between; font-size: 13px; line-height: 15px; padding: 0 6px 0 1px; }
.nav-ctl { display: flex; align-items: center; gap: 10px; }
.navpin { width: 9px; height: 11px; }
.navx { font-size: 10px; line-height: 10px; }
.nbtn { height: 22px; margin: 1px 1px 0 1px; border: 1px solid #a9a9a9; border-top-color: #8f8f8f; background: linear-gradient(#fbfbfb, #ececec); text-align: center; font-size: 12px; line-height: 21px; flex: none; }
.nbtn + .nbtn { margin-top: 0; }
.treebox { height: 514px; margin: 1px 2px 0 2px; background: #fff; border: 1px solid #9e9e9e; flex: none; overflow: hidden; }
.treetools { height: 29px; display: flex; align-items: center; gap: 4px; padding: 0 0 0 3px; }
.pm { width: 18px; height: 14px; }
.tree { display: flex; flex-direction: column; }
.tr { height: 16px; display: flex; align-items: center; flex: none; white-space: nowrap; padding-left: 7px; }
.tr em { font: 10px/16px "Liberation Mono", monospace; }
.ex { width: 8px; height: 8px; flex: none; border-right: 2px solid #bbb; border-top: 2px solid #bbb; transform: rotate(45deg) scale(.8); }
.ex.open { border-color: #555; transform: rotate(135deg) scale(.8); margin-top: -3px; }
.dash { width: 6px; height: 1px; margin: 0 -2px 0 2px; flex: none; background: repeating-linear-gradient(90deg, #888 0 1px, transparent 1px 2px); }
.fd { width: 16px; height: 14px; flex: none; margin-right: 5px; }
.g1 { width: 19px; height: 16px; flex: none; margin-left: 5px; background: repeating-linear-gradient(#888 0 1px, transparent 1px 2px) left top / 1px 100% no-repeat; }
.g2 { width: 12px; height: 16px; flex: none; background: repeating-linear-gradient(#888 0 1px, transparent 1px 2px) left top / 1px 100% no-repeat, repeating-linear-gradient(90deg, #888 0 1px, transparent 1px 2px) left center / 100% 1px no-repeat; }
.g2.last { background: repeating-linear-gradient(#888 0 1px, transparent 1px 2px) left top / 1px 50% no-repeat, repeating-linear-gradient(90deg, #888 0 1px, transparent 1px 2px) left center / 100% 1px no-repeat; }
.g2.short { width: 9px; }
.ti { width: 14px; height: 14px; flex: none; margin-right: 6px; }
.picked { display: flex; align-items: center; background: #d9d9d9; height: 16px; width: 81px; padding-left: 3px; }
.cadi { width: 16px; height: 16px; margin-left: 6px; flex: none; }
.newtag { font: 700 8px/8px "Liberation Sans", sans-serif; background: #f5d800; color: #333; padding: 0 1px; align-self: flex-start; margin-left: 1px; }

.work { flex: 1; display: flex; flex-direction: column; margin-left: 4px; min-width: 0; }
.r2 { height: 28px; padding: 1px 0 2px; }
.r3 { height: 28px; gap: 3px; padding: 0 0 2px; }
.r4 { height: 28px; gap: 3px; padding: 0 0 1px; }
.b21 { width: 791px; padding-left: 3px; }
.b31 { width: 638px; padding-left: 3px; gap: 3px; }
.b31 > .sep { margin: 0 2px; }
.t-a { margin-left: 2px; }
.t-b { margin-left: 1px; }
.t-c { margin-left: 5px; }
.t-d { margin-left: 2px; }
.b32 { width: 421px; padding-left: 3px; gap: 7px; }
.b41 { width: 1036px; padding-left: 3px; }
.b42 { width: 28px; padding-left: 3px; }
.pick { display: flex; align-items: center; justify-content: space-between; background: #fff; height: 24px; padding-left: 2px; flex: none; }
.pb { width: 12px; height: 24px; background: #f3f3f3; display: flex; align-items: center; justify-content: center; }
.pb .car { margin: 0; }
.p1 { width: 58px; margin-left: 2px; }
.p2 { width: 69px; }
.p3 { width: 70px; }
.p4 { width: 69px; margin-left: -2px; }
.p5 { width: 69px; }
.p6 { width: 58px; margin-left: 1px; }
.s-sel { gap: 7px; }
.isel { width: 12px; height: 16px; flex: none; }
.s-pt { gap: 6px; margin-left: -3px; }
.ipt { width: 13px; height: 13px; flex: none; }
.combo { width: 55px; height: 22px; background: #fff; border: 1px solid #7a7a7a; display: flex; align-items: center; justify-content: flex-end; padding-right: 3px; flex: none; }

.canvas { height: 507px; background: #000; flex: none; }
.cad { display: block; width: 1132px; height: 507px; }
.wl circle { fill: none; stroke: #a0a0a0; stroke-width: 1; }
.gl path, .gl circle { fill: none; stroke: #0a8a0a; stroke-width: 1; }
.rl path { fill: none; stroke: #f00; stroke-width: 1.300; }
.rl path.drk { stroke: #b00000; }
.rdots { stroke: #f00; stroke-dasharray: 2 2; fill: none; }
.lbl text { fill: #d2d2d2; font: 15px "Liberation Sans", sans-serif; text-anchor: middle; }

.r5 { height: 32px; gap: 3px; padding: 1px 0 2px; }
.b51 { width: 211px; padding-left: 2px; }
.a-snap { margin: 0 -4px; padding: 0 2px 0 3px; width: 74px; gap: 3px; }
.b52 { width: 260px; padding-left: 1px; }
.a-perp { width: 52px; margin: 0 -9px 0 -5px; padding: 0 2px 0 3px; gap: 3px; }
.a-mid { width: 51px; margin: 0 -4px 0 0; padding: 0 2px 0 3px; gap: 3px; }
.b53 { width: 410px; padding-left: 2px; gap: 3px; }
.dis { color: #8f8f8f; }
.spin { width: 58px; height: 22px; border: 1px solid #7a7a7a; background: #f4f4f4; display: flex; align-items: center; justify-content: flex-end; color: #7f7f7f; padding-right: 1px; flex: none; gap: 6px; }
.sp2 { width: 68px; }
.arr { width: 10px; display: flex; flex-direction: column; gap: 6px; align-items: center; }
.arr i { width: 6px; height: 3px; border-left: 3px solid transparent; border-right: 3px solid transparent; border-bottom: 3px solid #555; }
.arr i + i { border-bottom: 0; border-top: 3px solid #555; }
.cb { width: 11px; height: 11px; border: 1px solid #888; background: #fff; flex: none; }
.rott { margin-left: 5px; }
.b53 > .sep { margin: 0 1px; }

.status { height: 21px; flex: none; display: flex; gap: 3px; background: #f0f0f0; padding-top: 2px; }
.c { display: flex; align-items: center; height: 19px; background: linear-gradient(#fdfdfd, #f6f6f6); border: 1px solid #dcdcdc; padding-left: 2px; white-space: nowrap; flex: none; }
.c em { font: 10px/16px "Liberation Mono", monospace; }
.c1 { width: 147px; }
.c2 { width: 77px; }
.c3 { width: 97px; }
.c4 { width: 47px; }
.c5 { flex: 1; }

.taskbar { height: 40px; flex: none; display: flex; background: #040c10; color: #fff; }
.start { width: 48px; background: #000; display: flex; align-items: center; justify-content: center; flex: none; padding-top: 2px; }
.winico { width: 16px; height: 16px; }
.search { width: 344px; background: #333; display: flex; align-items: center; padding: 2px 0 0 9px; color: #a0a8b0; flex: none; font-size: 12px; }
.cortana { width: 20px; height: 20px; border-radius: 50%; border: 2px solid #e8e8e8; margin-right: 7px; flex: none; }
.micico { width: 14px; height: 20px; margin-left: auto; margin-right: 13px; }
.apps { display: flex; margin-left: 2px; flex: none; }
.app-c { width: 49px; height: 40px; display: flex; align-items: center; justify-content: center; flex: none; position: relative; }
.wide2 { width: 53px; }
.ai { width: 24px; height: 24px; }
.tb { width: 14px; height: 14px; position: absolute; left: 28px; top: 3px; }
.run::after { content: ""; position: absolute; left: 5px; right: 4px; bottom: 0; height: 2px; background: #76b9ed; }
.cur { width: 50px; background: #3b4247; border-bottom: 2px solid #76b9ed; }
.tray { flex: 1; display: flex; align-items: center; min-width: 0; padding-left: 178px; }
.cpu { width: 60px; display: flex; flex-direction: column; align-items: center; line-height: 17px; flex: none; }
.ti-c { width: 24px; display: flex; justify-content: center; flex: none; }
.ti-c svg { width: 16px; height: 14px; }
.up { margin-left: 8px; }
.zh { width: 24px; text-align: center; flex: none; font-size: 13px; }
.tray-s { width: 16px; height: 16px; margin-left: 8px; flex: none; }
.clock { width: 70px; margin-left: 12px; display: flex; flex-direction: column; align-items: center; line-height: 18px; flex: none; }
.note { width: 50px; margin-left: 4px; position: relative; display: flex; justify-content: center; flex: none; }
.note svg { width: 16px; height: 14px; }
.badge { position: absolute; left: 18px; top: 5px; min-width: 22px; height: 18px; background: #444; border: 1px solid #777; border-radius: 9px; font-weight: 700; font-size: 12px; line-height: 16px; text-align: center; }

.speed { position: absolute; left: 637px; top: 60px; width: 130px; height: 50px; }
.speed::before { content: ""; position: absolute; left: 25px; top: 6px; width: 104px; height: 39px; border-radius: 20px; background: linear-gradient(#f4f4f4, #dcdcdc); box-shadow: 0 1px 3px rgba(0,0,0,.45); }
.ball { position: absolute; left: 0; top: 0; width: 50px; height: 50px; border-radius: 50%; border: 3px solid #dfe3e2; background: radial-gradient(ellipse 12px 3px at 50% 6px, #8fc9a5, transparent), linear-gradient(#1a7a45 0 34%, #3fbf5b 34% 100%); box-shadow: 0 0 2px 1px rgba(80,80,80,.6); color: #fff; font-size: 14px; display: flex; align-items: center; justify-content: center; }
.rates { position: absolute; left: 56px; top: 12px; display: flex; flex-direction: column; font: 10px/15px "Noto Sans", sans-serif; color: #111; }
.rates span { display: flex; gap: 6px; align-items: center; }
.rates i { width: 6px; height: 7px; flex: none; }
.au { background: linear-gradient(#e8553a, #e8553a) center bottom / 2px 4px no-repeat, conic-gradient(from 150deg at 50% 0, #e8553a 60deg, transparent 0) top / 6px 4px no-repeat; }
.ad { background: linear-gradient(#3aa04a, #3aa04a) center top / 2px 4px no-repeat, conic-gradient(from -30deg at 50% 100%, #3aa04a 60deg, transparent 0) bottom / 6px 4px no-repeat; }
.plus { position: absolute; left: 104px; top: 15px; width: 18px; height: 18px; border-radius: 50%; background: #3d86d6; color: #fff; font: 700 16px/17px "Liberation Sans", sans-serif; text-align: center; }
.plus i { position: absolute; right: -4px; top: -3px; width: 8px; height: 8px; border-radius: 50%; background: #d9302a; }

.ime { position: absolute; left: 1181px; top: 703px; width: 185px; height: 29px; display: flex; align-items: center; gap: 7px; }
.ime::before { content: ""; position: absolute; left: 8px; right: 0; top: 5px; bottom: 5px; background: #fff; }
.ime > * { position: relative; }
.ime svg { width: 15px; height: 15px; flex: none; }
.ime b { color: #1a6fc4; font-size: 15px; font-weight: 700; flex: none; }
.ime .ime-s { width: 27px; height: 28px; margin-right: 0; }
.ime .punc { font-size: 13px; width: 14px; }

.ml-1 { margin-left: -1px; }
.ml-2 { margin-left: -2px; }
.ml-3 { margin-left: -3px; }
.ml-5 { margin-left: -5px; }
.mp-1 { margin-left: 1px; }
```
